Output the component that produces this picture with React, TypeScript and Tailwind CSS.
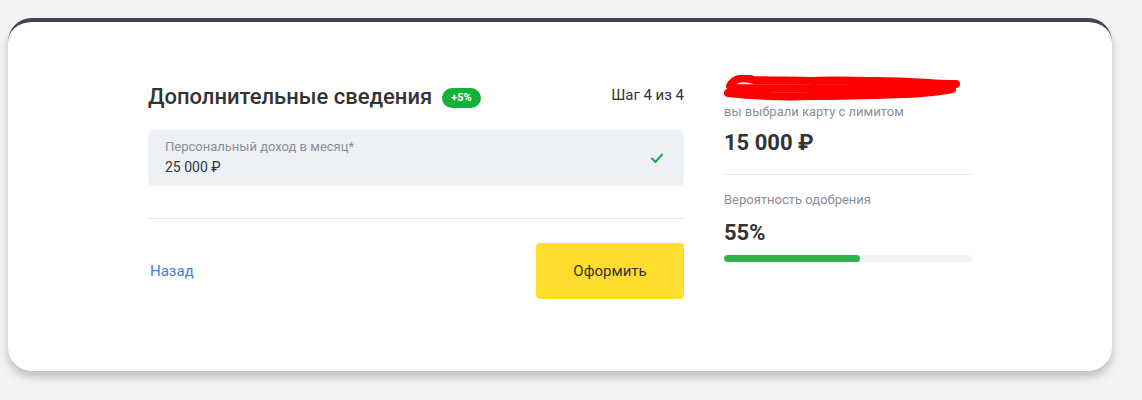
import React from "react";

const font = { fontFamily: "Roboto, 'Noto Sans', sans-serif" };

function Scribble() {
  return (
    <svg width="236" height="26" viewBox="0 0 236 26" className="block">
      <path
        d="M6 11 C10 3 20 2 30 5 C50 6 70 5 90 6 C110 5 130 6 150 6 C170 6 190 7 205 8 C215 9 224 9 232 9"
        stroke="#ff0000"
        strokeWidth="8"
        fill="none"
        strokeLinecap="round"
      />
      <path
        d="M4 18 C30 21 60 22 90 21 C120 21 150 20 180 19 C200 18 215 17 228 14"
        stroke="#ff0000"
        strokeWidth="8"
        fill="none"
        strokeLinecap="round"
      />
      <path
        d="M8 13 C50 14 100 13 150 13 C180 13 205 13 224 12"
        stroke="#ff0000"
        strokeWidth="8"
        fill="none"
        strokeLinecap="round"
      />
    </svg>
  );
}

export default function App() {
  return (
    <div className="min-h-[400px] w-full bg-[#f3f4f6] pt-[18px]" style={font}>
      <div className="ml-2 h-[353px] w-[1104px] rounded-3xl border-t-4 border-[#3e4352] bg-white shadow-[0_6px_10px_rgba(0,0,0,0.22)]">
        <div className="flex gap-10 px-[140px] pt-[61px]">
          {/* left */}
          <div className="w-[536px]">
            <div className="flex h-7 items-center justify-between">
              <div className="flex items-center gap-[10px]">
                <h2 className="text-[22px] font-medium leading-7 text-[#333333]">
                  Дополнительные сведения
                </h2>
                <span className="mt-[2px] rounded-full bg-[#12b23a] px-[9px] py-[3px] text-[11px] font-bold leading-[14px] text-white">
                  +5%
                </span>
              </div>
              <span className="-mt-[4px] text-[15px] text-[#333333]">Шаг 4 из 4</span>
            </div>
            <div className="mt-[19px] flex h-14 items-center justify-between rounded-md bg-[#edf1f6] pl-[17px] pr-5">
              <div className="flex flex-col">
                <span className="text-[13px] leading-4 text-[#8a8f98]">
                  Персональный доход в месяц*
                </span>
                <span className="mt-[2px] text-sm leading-5 text-[#333333]">25 000 ₽</span>
              </div>
              <svg width="14" height="14" viewBox="0 0 14 14" fill="none">
                <path
                  d="M2 7.5 L5.5 11 L12 3.5"
                  stroke="#22a94a"
                  strokeWidth="2"
                  strokeLinecap="round"
                  strokeLinejoin="round"
                />
              </svg>
            </div>
            <div className="mt-8 h-px bg-[#e6e8eb]" />
            <div className="mt-6 flex items-center justify-between">
              <a className="pl-[2px] text-[15px] text-[#3f7ed8]">Назад</a>
              <button className="h-14 w-[148px] rounded bg-[#ffdd2d] text-[15px] text-[#333333]">
                Оформить
              </button>
            </div>
          </div>
          {/* right */}
          <div className="-mt-[8px] w-[248px]">
            <Scribble />
            <div className="mt-[3px] text-[13px] leading-4 text-[#8a8f98]">
              вы выбрали карту с лимитом
            </div>
            <div className="mt-[9px] text-[22px] font-bold leading-7 text-[#333333]">15 000 ₽</div>
            <div className="mt-[17px] h-px bg-[#e6e8eb]" />
            <div className="mt-[17px] text-[13px] leading-4 text-[#8a8f98]">Вероятность одобрения</div>
            <div className="mt-[11px] text-[22px] font-bold leading-7 text-[#333333]">55%</div>
            <div className="mt-[8px] h-[7px] w-full rounded-full bg-[#f3f4f5]">
              <div className="h-full rounded-full bg-[#33b34b]" style={{ width: "55%" }} />
            </div>
          </div>
        </div>
      </div>
    </div>
  );
}
